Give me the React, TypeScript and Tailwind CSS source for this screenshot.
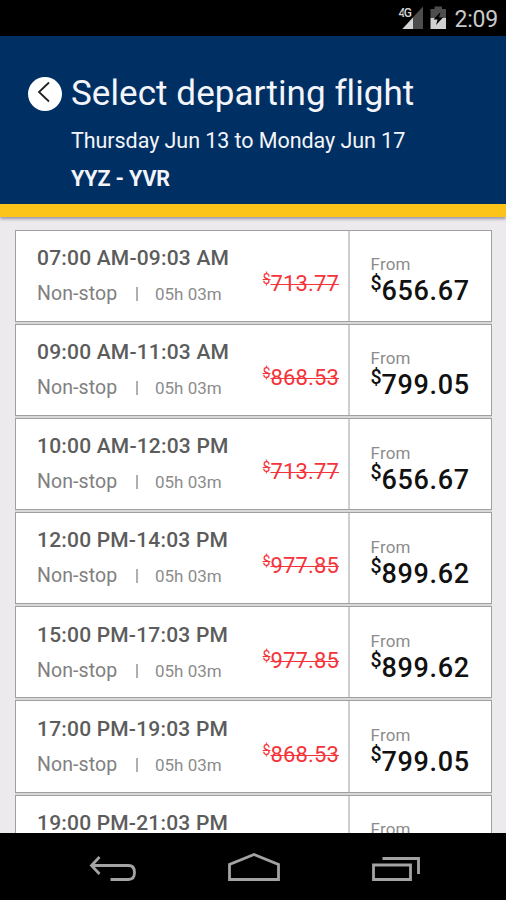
import React from "react";

const flights = [
  { time: "07:00 AM-09:03 AM", was: "713.77", price: "656.67" },
  { time: "09:00 AM-11:03 AM", was: "868.53", price: "799.05" },
  { time: "10:00 AM-12:03 PM", was: "713.77", price: "656.67" },
  { time: "12:00 PM-14:03 PM", was: "977.85", price: "899.62" },
  { time: "15:00 PM-17:03 PM", was: "977.85", price: "899.62" },
  { time: "17:00 PM-19:03 PM", was: "868.53", price: "799.05" },
  { time: "19:00 PM-21:03 PM", was: "713.77", price: "656.67" },
];

function StatusBar() {
  return (
    <div className="flex h-9 shrink-0 items-center justify-end bg-black pr-2 text-[#c9c9c9]">
      <svg width="26" height="24" viewBox="0 0 26 24" className="mr-1.5">
        <path d="M25 0.500V23H4Z" fill="#4d4d4d" />
        <path d="M15 11.500V23H4.500Z" fill="#d5d5d5" />
        <text x="0.500" y="10.500" fontSize="12" fontWeight="500" fill="#d5d5d5" stroke="#000" strokeWidth="2" paintOrder="stroke" textLength="13.500">
          4G
        </text>
      </svg>
      <svg width="17" height="24" viewBox="0 0 17 24" className="mr-[7px]">
        <path d="M0.500 3H4.500V0.500H12V3H16V12H0.500Z" fill="#4d4d4d" />
        <path d="M0.500 12H16V23H0.500Z" fill="#d0d0d0" />
        <path d="M10.500 6L3.500 13.500H7.500L6 19L13 11.500H9Z" fill="#000" />
      </svg>
      <span className="pt-[3px] text-[23px] leading-6 tracking-[-0.2px]">2:09</span>
    </div>
  );
}

function Header() {
  return (
    <header className="relative z-10 h-[181px] shrink-0 border-b-[13px] border-[#fcc418] bg-[#003063] pt-9 text-[#f4f5fa] shadow-[0_2px_3px_rgba(90,80,110,0.55)]">
      <div className="flex pl-7">
        <button className="mt-[5px] flex h-[34px] w-[34px] items-center justify-center rounded-full bg-white">
          <svg width="34" height="34" viewBox="0 0 34 34" fill="none" stroke="#222" strokeWidth="1.800">
            <path d="M21 5.500L11 15L21 24.500" />
          </svg>
        </button>
        <div className="ml-[9px] whitespace-nowrap">
          <h1 className="text-[35px] leading-[43px] tracking-[0.07px]">Select departing flight</h1>
          <p className="mt-[13px] text-[21.5px] leading-[26px] tracking-[-0.06px]">Thursday Jun 13 to Monday Jun 17</p>
          <p className="mt-3 text-[21.5px] leading-[26px] font-bold tracking-[-0.15px]">YYZ - YVR</p>
        </div>
      </div>
    </header>
  );
}

function FlightCard({ time, was, price }: { time: string; was: string; price: string }) {
  return (
    <div className="flex h-[92.2px] shrink-0 whitespace-nowrap border border-[#a0a0a0] bg-white">
      <div className="flex w-[334px] shrink-0 justify-between border-r-2 border-[#cfcfcf] pt-[15.3px] pr-[9px] pl-[21px]">
        <div>
          <div className="text-[21px] leading-6 font-medium tracking-[0.2px] text-[#5c5c5c]">{time}</div>
          <div className="mt-3 flex text-[19.5px] leading-6 text-[#808080]">
            <span className="w-[98px] tracking-[0.1px]">Non-stop</span>
            <span className="w-[20px] text-[16px]">|</span>
            <span className="text-[17px] text-[#8c8c8c]">05h 03m</span>
          </div>
        </div>
        <div className="mt-[25px] flex text-[#f5333a]">
          <span className="text-[14px] leading-4 line-through decoration-1">$</span>
          <span className="text-[22px] leading-[26px] tracking-[0.15px] line-through decoration-1">{was}</span>
        </div>
      </div>
      <div className="pt-[23.7px] pl-[20.5px]">
        <div className="text-[17px] leading-5 tracking-[0.2px] text-[#8c8c8c]">From</div>
        <div className="flex text-[#111]">
          <span className="text-[19.5px] leading-[19px] font-medium">$</span>
          <span className="text-[27px] leading-[34px] font-medium tracking-[0.65px]">{price}</span>
        </div>
      </div>
    </div>
  );
}

function NavBar() {
  return (
    <nav className="relative z-10 h-[67px] shrink-0 bg-black">
      <svg width="506" height="67" viewBox="0 0 506 67" fill="none" stroke="#a3a3a3" strokeWidth="2.800">
        <path d="M99.500 24L91.500 32.500L99.500 41M91.500 32.500H128.500Q134.500 32.500 134.500 39.500T128.500 46.500H110.500" />
        <path d="M229.500 46.500V31.500L254 21.500L278.500 31.500V46.500Z" />
        <path d="M373.500 32H410.500V46.500H373.500Z" />
        <path d="M382.500 25.500H418.500V41" />
      </svg>
    </nav>
  );
}

export default function App() {
  return (
    <div className="flex h-[900px] w-[506px] flex-col overflow-hidden bg-[#edeaee] font-[Roboto,sans-serif]">
      <StatusBar />
      <Header />
      <main className="min-h-0 flex-1 overflow-hidden pt-[12.5px] pr-[14px] pl-[15px]">
        <div className="flex flex-col gap-0.5 bg-[#d9d9d9]">
          {flights.map((flight) => (
            <FlightCard key={flight.time} {...flight} />
          ))}
        </div>
      </main>
      <NavBar />
    </div>
  );
}
